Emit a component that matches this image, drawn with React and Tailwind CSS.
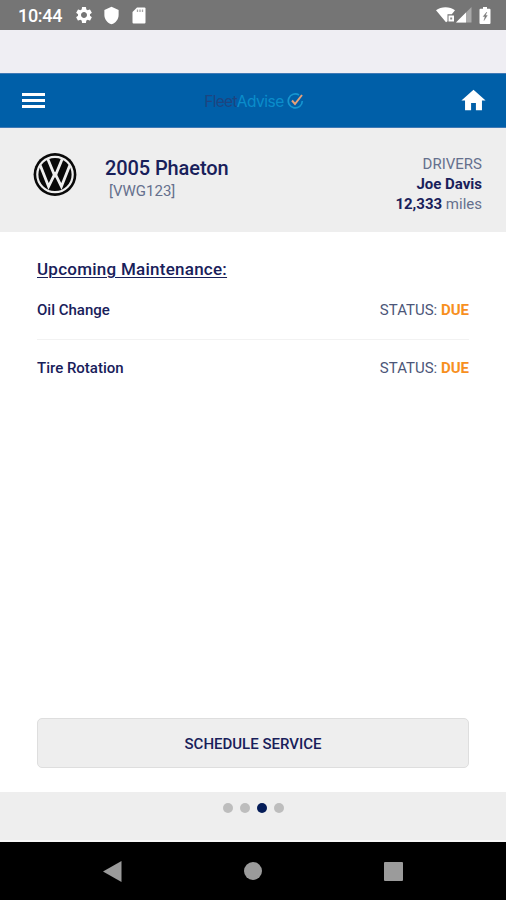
import React from 'react';
import { MdSettings, MdShield, MdHome } from 'react-icons/md';

const tasks = [
  { id: 1, name: 'Oil Change', status: 'DUE' },
  { id: 2, name: 'Tire Rotation', status: 'DUE' },
];

const StatusBar = () => (
  <div className="h-[30px] shrink-0 bg-[#757575] text-white flex items-center pl-[18px] pr-[15px]">
    <span className="w-[44px] text-[18px] leading-[30px] font-medium tracking-[-0.3px] pt-[2px]">10:44</span>
    <MdSettings className="ml-[12px] size-[20px]" />
    <MdShield className="ml-[8px] size-[19px]" />
    <svg className="ml-[11px] w-[14px] h-[17px]" viewBox="0 0 14 17">
      <path d="M5 .5h7.5a1 1 0 0 1 1 1v14a1 1 0 0 1-1 1h-11a1 1 0 0 1-1-1V5z" fill="currentColor" />
      <path d="M5.5 2.5v2.500M8 2.5v2.500M10.5 2.5v2.500" stroke="#a5a5a5" strokeWidth="1.3" />
    </svg>
    <svg className="ml-auto w-[19px] h-[16px]" viewBox="0 0 19 16">
      <path d="M0 3.2C5-.7 14-.7 19 3.2L15.8 7.3H11.500v7l-1.500 .9z" fill="currentColor" />
      <path d="M12.5 8.5h5.5v6h-5.5z" fill="currentColor" />
      <path d="M14.200 10.500h2v2h-2z" fill="#8a8a8a" />
    </svg>
    <svg className="ml-[1px] w-[16px] h-[16px]" viewBox="0 0 16 16">
      <path d="M15.5 0v15.5H0z" fill="#a9a9a9" />
      <path d="M10 5.5v10H0z" fill="currentColor" />
    </svg>
    <svg className="ml-[7px] w-[12px] h-[17px]" viewBox="0 0 12 17">
      <path d="M4 0h4v1.8h2.5a1 1 0 0 1 1 1V16a1 1 0 0 1-1 1h-9a1 1 0 0 1-1-1V2.8a1 1 0 0 1 1-1H4z" fill="currentColor" />
      <path d="M7.8 5L4.200 9.500h1.900L5 13.500l3.300-5H6.400z" fill="#777" stroke="#777" strokeWidth=".4" />
    </svg>
  </div>
);

const NavBar = () => (
  <nav className="h-[55px] shrink-0 bg-[#005fa8] border-y border-[#3f79b5] flex items-center justify-between pl-[22px] pr-[18px]">
    <button className="w-[23px] flex flex-col gap-[3px]">
      <span className="h-[3px] bg-white" />
      <span className="h-[3px] bg-white" />
      <span className="h-[3px] bg-white" />
    </button>
    <div className="flex items-center ml-[5px] pt-[2px] text-[15.5px] leading-none">
      <span className="font-['Inter'] tracking-[-0.7px] text-[#1d4480]">Fleet</span>
      <span className="font-['Inter'] tracking-[-0.5px] text-[#0a8dcb]">Advise</span>
      <svg className="ml-[3px] w-[18px] h-[17px]" viewBox="0 0 18 17">
        <path d="M12 2A7 7 0 1 0 15.3 8" fill="none" stroke="#1595d0" strokeWidth="1.7" />
        <path d="M5 7.5l3 3.5L15 2" fill="none" stroke="#e6a079" strokeWidth="2" />
      </svg>
    </div>
    <MdHome className="size-[29px] text-white" />
  </nav>
);

const VwLogo = () => (
  <svg className="size-[44px]" viewBox="0 0 44 44">
    <circle cx="22" cy="21.5" r="21.4" fill="#090909" />
    <circle cx="22" cy="21.5" r="17.7" fill="none" stroke="#eee" strokeWidth="2.2" />
    <g fill="none" stroke="#eee" strokeWidth="2.8">
      <path d="M14.6 5.500L20.800 20.500h2.400L29.400 5.500" />
      <path d="M7.300 12.500l8.300 21L20.800 23h2.400l5.200 10.500L36.700 12.500" />
    </g>
  </svg>
);

const App = () => {
  return (
    <div className="w-[506px] h-[900px] overflow-hidden flex flex-col bg-white text-[#18205a] font-['Roboto',sans-serif] whitespace-nowrap">
      <StatusBar />
      <div className="h-[43px] shrink-0 bg-[#efeef3]" />
      <NavBar />

      <header className="h-[104px] shrink-0 bg-[#eee] flex pl-[33px] pr-[24px]">
        <div className="pt-[25px]">
          <VwLogo />
        </div>
        <div className="ml-[28px] pt-[28px]">
          <h1 className="text-[20px] leading-[24px] font-medium tracking-[-0.1px]">2005 Phaeton</h1>
          <p className="pl-[4px] text-[15px] leading-[22px] text-[#65708d]">[VWG123]</p>
        </div>
        <div className="ml-auto pt-[26px] text-right text-[15px] leading-[20px]">
          <p className="text-[#65708d]">DRIVERS</p>
          <p className="font-bold">Joe Davis</p>
          <p className="text-[#65708d]">
            <b className="text-[#18205a]">12,333</b> miles
          </p>
        </div>
      </header>

      <main className="flex-1 flex flex-col px-[37px] pt-[25px] pb-[24px]">
        <h2 className="text-[17px] leading-[25px] tracking-[0.25px] font-medium underline underline-offset-2 decoration-1">Upcoming Maintenance:</h2>
        <ul>
          {tasks.map((task) => (
            <li
              key={task.id}
              className="h-[58px] pt-[18px] flex justify-between text-[15px] leading-[20px] border-b border-[#f2f2f2] last:border-0"
            >
              <span className="font-medium">{task.name}</span>
              <span className="text-[#4c5678]">
                STATUS: <b className="text-[#f7901e]">{task.status}</b>
              </span>
            </li>
          ))}
        </ul>
        <button className="mt-auto h-[50px] pt-[2px] rounded-[5px] border border-[#dedede] bg-[#eee] text-[15px] font-medium">
          SCHEDULE SERVICE
        </button>
      </main>

      <footer className="h-[50px] shrink-0 bg-[#eee] border-b-2 border-[#f8f8f8] flex justify-center gap-[7px] pt-[11px]">
        <span className="size-[10px] rounded-full bg-[#bdbdbd]" />
        <span className="size-[10px] rounded-full bg-[#bdbdbd]" />
        <span className="size-[10px] rounded-full bg-[#041c58]" />
        <span className="size-[10px] rounded-full bg-[#bdbdbd]" />
      </footer>

      <div className="h-[58px] shrink-0 bg-black flex items-center pl-[103px] pr-[103px] justify-between">
        <svg className="w-[19px] h-[21px]" viewBox="0 0 19 21">
          <path d="M0 10.500L18.500 0v21z" fill="#9b9b9b" />
        </svg>
        <span className="size-[18px] rounded-full bg-[#9b9b9b]" />
        <span className="size-[19px] rounded-[1px] bg-[#9b9b9b]" />
      </div>
    </div>
  );
};

export default App;
